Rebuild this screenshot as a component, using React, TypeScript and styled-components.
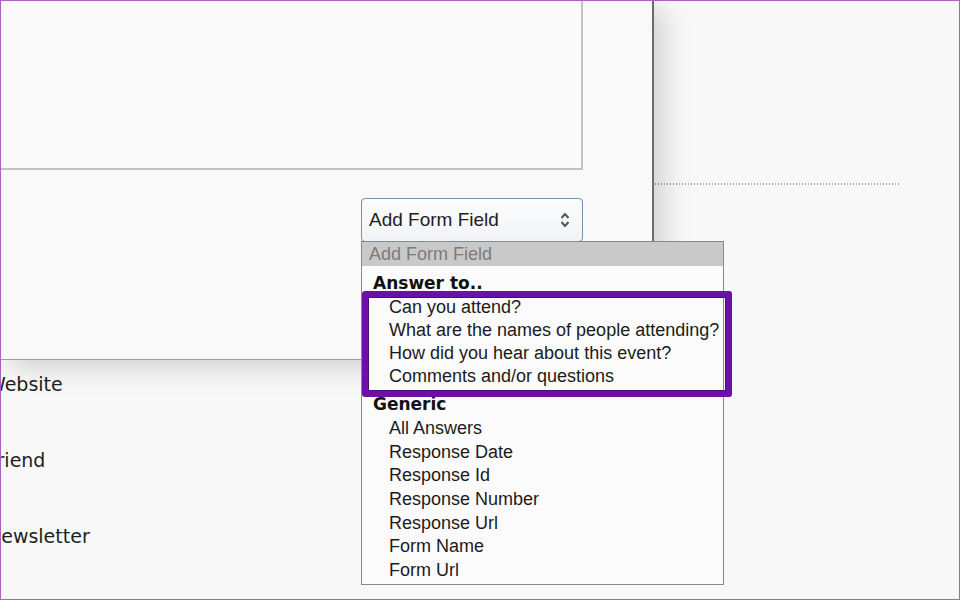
import React from "react";
import styled, { createGlobalStyle } from "styled-components";

const GlobalStyle = createGlobalStyle`
    html, body {
        margin: 0;
        padding: 0;
        background: #f8f8f8;
    }
    * {
        box-sizing: border-box;
    }
`;

const Page = styled.div`
    position: relative;
    width: 960px;
    height: 600px;
    overflow: hidden;
    background: #f8f8f8;
    border: 1px solid #a861bd;
    font-family: "Liberation Sans", Arial, sans-serif;
    color: #1b1b1b;
`;

const TopRow = styled.div`
    display: flex;
    align-items: flex-start;
`;

const Panel = styled.div`
    width: 653px;
    height: 359px;
    flex-shrink: 0;
    display: flex;
    flex-direction: column;
    align-items: flex-end;
    padding-right: 69px;
    background: #f9f9f9;
    border-right: 2px solid #6b6b6b;
    border-bottom: 1px solid #9c9c9c;
    box-shadow: 10px 8px 26px rgba(0, 0, 0, 0.16);
    position: relative;
    z-index: 1;
`;

const NotesBox = styled.div`
    align-self: stretch;
    height: 172px;
    margin-top: -3px;
    margin-left: -3px;
    border: 2px solid #c3c3c3;
    background: #fafafa;
`;

const SelectWrap = styled.div`
    position: relative;
    margin-top: 28px;
    width: 222px;
`;

const FieldSelect = styled.div`
    height: 44px;
    display: flex;
    align-items: center;
    justify-content: space-between;
    padding: 0 12px 0 7px;
    border: 1px solid #7493af;
    border-radius: 4px;
    background: linear-gradient(#fbfcfd, #f2f4f7);
    font-size: 19px;
    color: #1e1e1e;
`;

const Menu = styled.div`
    position: absolute;
    top: 100%;
    left: 0;
    width: 363px;
    height: 344px;
    margin-top: -1px;
    border: 1px solid #7e8c94;
    background: #fbfbfb;
    z-index: 5;
`;

const Option = styled.div<{ $selected?: boolean; $indent?: boolean; $tall?: boolean }>`
    height: ${p => (p.$selected ? "24px" : p.$tall ? "23.7px" : "23px")};
    line-height: ${p => (p.$selected ? "24px" : p.$tall ? "23.7px" : "23px")};
    padding-left: ${p => (p.$indent ? "27px" : "7px")};
    padding-top: ${p => (p.$selected ? "0" : "1px")};
    font-size: 18px;
    white-space: nowrap;
    background: ${p => (p.$selected ? "#c9c9c9" : "transparent")};
    color: ${p => (p.$selected ? "#7b7b7b" : "#1b1b1b")};
`;

const GroupLabel = styled.div`
    height: 29px;
    line-height: 26px;
    padding-top: 4px;
    padding-left: 11px;
    font-family: "DejaVu Sans", Verdana, sans-serif;
    font-weight: 700;
    font-size: 17px;
    color: #111;
`;

const Highlight = styled.div`
    position: absolute;
    left: 0;
    top: 49px;
    width: 370px;
    height: 106px;
    border: 6px solid #6a11a8;
    border-radius: 3px;
    box-shadow: inset 0 0 0 1px #4c0a7a;
    pointer-events: none;
`;

const Side = styled.div`
    flex: 1;
    padding-top: 182px;
`;

const DottedRule = styled.div`
    width: 244px;
    height: 2px;
    margin-left: 1px;
    background-image: linear-gradient(to right, #8f8f8f 1.5px, transparent 1.5px);
    background-size: 3px 2px;
    background-repeat: repeat-x;
    opacity: 0.85;
`;

const SourceList = styled.div`
    display: flex;
    flex-direction: column;
    gap: 52px;
    padding-top: 12px;
    margin-left: -14px;
`;

const SourceItem = styled.div`
    height: 24px;
    line-height: 24px;
    font-family: "DejaVu Sans", Verdana, sans-serif;
    font-size: 19px;
    color: #1e1e1e;
`;

function UpDown() {
    return (
        <svg width="10" height="18" viewBox="0 0 10 18" fill="none">
            <path d="M1.5 7 L5 3 L8.5 7" stroke="#555" strokeWidth="2" strokeLinejoin="round" />
            <path d="M1.5 11 L5 15 L8.5 11" stroke="#555" strokeWidth="2" strokeLinejoin="round" />
        </svg>
    );
}

const answerFields = [
    "Can you attend?",
    "What are the names of people attending?",
    "How did you hear about this event?",
    "Comments and/or questions",
];

const genericFields = [
    "All Answers",
    "Response Date",
    "Response Id",
    "Response Number",
    "Response Url",
    "Form Name",
    "Form Url",
];

const sources = ["Website", "Friend", "Newsletter"];

export default function App() {
    return (
        <>
            <GlobalStyle />
            <Page>
                <TopRow>
                    <Panel>
                        <NotesBox />
                        <SelectWrap>
                            <FieldSelect>
                                <span>Add Form Field</span>
                                <UpDown />
                            </FieldSelect>
                            <Menu>
                                <Option $selected>Add Form Field</Option>
                                <GroupLabel>Answer to..</GroupLabel>
                                {answerFields.map(item => (
                                    <Option key={item} $indent>{item}</Option>
                                ))}
                                <GroupLabel>Generic</GroupLabel>
                                {genericFields.map(item => (
                                    <Option key={item} $indent $tall>{item}</Option>
                                ))}
                                <Highlight />
                            </Menu>
                        </SelectWrap>
                    </Panel>
                    <Side>
                        <DottedRule />
                    </Side>
                </TopRow>
                <SourceList>
                    {sources.map(item => (
                        <SourceItem key={item}>{item}</SourceItem>
                    ))}
                </SourceList>
            </Page>
        </>
    );
}
